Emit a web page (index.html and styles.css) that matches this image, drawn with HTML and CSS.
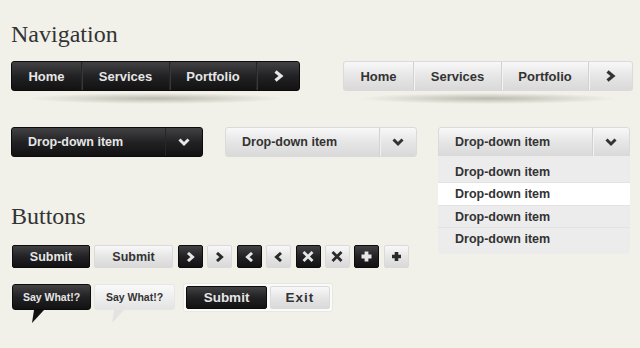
FILE: index.html
```html
<!DOCTYPE html>
<html lang="en">
<head>
	<meta charset="UTF-8">
	<title>UI Kit</title>
	<link rel="stylesheet" href="styles.css">
</head>
<body>
	<main class="page">
		<h1 class="title">Navigation</h1>

		<div class="nav-row">
			<div class="nav-wrap">
				<nav class="nav dark">
					<a class="nav-item home">Home</a>
					<a class="nav-item services">Services</a>
					<a class="nav-item portfolio">Portfolio</a>
					<a class="nav-item more">
						<svg width="11" height="12" viewBox="0 0 11 12"><path d="M2.5 1.5 L8 6 L2.5 10.5" fill="none" stroke="currentColor" stroke-width="3.2"/></svg>
					</a>
				</nav>
				<div class="nav-shadow"></div>
			</div>
			<div class="nav-wrap">
				<nav class="nav light">
					<a class="nav-item home">Home</a>
					<a class="nav-item services">Services</a>
					<a class="nav-item portfolio">Portfolio</a>
					<a class="nav-item more">
						<svg width="11" height="12" viewBox="0 0 11 12"><path d="M2.5 1.5 L8 6 L2.5 10.5" fill="none" stroke="currentColor" stroke-width="3.2"/></svg>
					</a>
				</nav>
				<div class="nav-shadow"></div>
			</div>
		</div>

		<div class="dropdown-row">
			<div class="dropdown dark">
				<span class="dropdown-label">Drop-down item</span>
				<span class="caret">
					<svg width="12" height="9" viewBox="0 0 12 9"><path d="M1.5 1.5 L6 6 L10.5 1.5" fill="none" stroke="currentColor" stroke-width="3"/></svg>
				</span>
			</div>
			<div class="dropdown light">
				<span class="dropdown-label">Drop-down item</span>
				<span class="caret">
					<svg width="12" height="9" viewBox="0 0 12 9"><path d="M1.5 1.5 L6 6 L10.5 1.5" fill="none" stroke="currentColor" stroke-width="3"/></svg>
				</span>
			</div>
			<div class="dropdown light open">
				<span class="dropdown-label">Drop-down item</span>
				<span class="caret">
					<svg width="12" height="9" viewBox="0 0 12 9"><path d="M1.5 1.5 L6 6 L10.5 1.5" fill="none" stroke="currentColor" stroke-width="3"/></svg>
				</span>
				<ul class="dropdown-menu">
					<li>Drop-down item</li>
					<li class="active">Drop-down item</li>
					<li>Drop-down item</li>
					<li>Drop-down item</li>
				</ul>
			</div>
		</div>

		<h1 class="title buttons-title">Buttons</h1>

		<div class="btn-row">
			<button class="btn dark submit">Submit</button>
			<button class="btn light submit">Submit</button>
			<div class="icon-group">
				<button class="btn dark icon"><svg width="9" height="10" viewBox="0 0 9 10"><path d="M2 1 L6.5 5 L2 9" fill="none" stroke="currentColor" stroke-width="3"/></svg></button>
				<button class="btn light icon"><svg width="9" height="10" viewBox="0 0 9 10"><path d="M2 1 L6.5 5 L2 9" fill="none" stroke="currentColor" stroke-width="3"/></svg></button>
				<button class="btn dark icon"><svg width="9" height="10" viewBox="0 0 9 10"><path d="M7 1 L2.5 5 L7 9" fill="none" stroke="currentColor" stroke-width="3"/></svg></button>
				<button class="btn light icon"><svg width="9" height="10" viewBox="0 0 9 10"><path d="M7 1 L2.5 5 L7 9" fill="none" stroke="currentColor" stroke-width="3"/></svg></button>
				<button class="btn dark icon"><svg width="12" height="11" viewBox="0 0 12 11"><path d="M1.5 1 L10.5 10 M10.5 1 L1.5 10" fill="none" stroke="currentColor" stroke-width="2.8"/></svg></button>
				<button class="btn light icon"><svg width="12" height="11" viewBox="0 0 12 11"><path d="M1.5 1 L10.5 10 M10.5 1 L1.5 10" fill="none" stroke="currentColor" stroke-width="2.8"/></svg></button>
				<button class="btn dark icon"><svg width="11" height="11" viewBox="0 0 11 11"><path d="M5.5 0.5 V10.5 M0.5 5.5 H10.5" fill="none" stroke="currentColor" stroke-width="3.8"/></svg></button>
				<button class="btn light icon"><svg width="11" height="11" viewBox="0 0 11 11"><path d="M5.5 1 V10 M1 5.5 H10" fill="none" stroke="currentColor" stroke-width="3.6"/></svg></button>
			</div>
		</div>

		<div class="btn-row bottom-row">
			<span class="bubble dark">Say What!?</span>
			<span class="bubble light">Say What!?</span>
			<div class="btn-group">
				<button class="btn dark group-submit">Submit</button>
				<button class="btn light group-exit">Exit</button>
			</div>
		</div>
	</main>
</body>
</html>
```

FILE: styles.css
```css
html {
	box-sizing: border-box;
}

*, *:before, *:after {
	box-sizing: inherit;
}

body {
	margin: 0;
	background: #f1f1ea;
	font-family: "Liberation Sans", Arial, sans-serif;
	font-weight: bold;
	font-size: 12.5px;
}

.page {
	padding: 0 10px 0 11px;
	width: 640px;
	height: 348px;
	overflow: hidden;
}

.title {
	font-family: "Liberation Serif", Georgia, serif;
	font-weight: normal;
	font-size: 24px;
	line-height: 28px;
	color: #333;
	margin: 20px 0 0;
}

.dark {
	background: linear-gradient(#424245, #222224 50%, #121213);
	color: #e6e6e6;
	border: 1px solid #0c0c0c;
}

.light {
	background: linear-gradient(#f8f8f8, #e6e6e6 50%, #d9d9d9);
	color: #333;
	border: 1px solid #dadada;
}

/* navigation */

.nav-row {
	display: flex;
	gap: 43px;
	margin-top: 13px;
}

.nav {
	display: flex;
	height: 30px;
	border-radius: 3px;
	font-size: 13px;
}

.nav-item {
	display: flex;
	align-items: center;
	justify-content: center;
}

.nav-item + .nav-item {
	border-left: 1px solid #262628;
	box-shadow: inset 1px 0 #38383b;
}

.nav.light .nav-item + .nav-item {
	border-left: 1px solid #d2d2d2;
	box-shadow: inset 1px 0 #f4f4f4;
}

.home { width: 69px; }
.services { width: 88px; }
.portfolio { width: 87px; }
.more { width: 43px; }

.nav.light .more { width: 44px; }

.nav-shadow {
	height: 11px;
	margin: 2px 16px 0;
	background: radial-gradient(ellipse closest-side, rgba(60, 60, 40, .3), rgba(60, 60, 40, 0));
}

/* dropdowns */

.dropdown-row {
	display: flex;
	gap: 22px;
	margin-top: 23px;
}

.dropdown {
	display: flex;
	width: 192px;
	height: 30px;
	border-radius: 3px;
}

.dropdown-label {
	flex: 1;
	display: flex;
	align-items: center;
	padding-left: 16px;
}

.caret {
	width: 37px;
	display: flex;
	align-items: center;
	justify-content: center;
	border-left: 1px solid #262628;
}

.dropdown.light .caret {
	border-left: 1px solid #d2d2d2;
	box-shadow: inset 1px 0 #f2f2f2;
}

.dropdown.open {
	position: relative;
	border-radius: 3px 3px 0 0;
	margin-left: -1px;
}

.dropdown-menu {
	position: absolute;
	top: 100%;
	left: -1px;
	right: -1px;
	margin: 0;
	padding: 5px 0 3px;
	list-style: none;
	background: #ececec;
	border-radius: 0 0 3px 3px;
	color: #333;
}

.dropdown-menu li {
	height: 22.4px;
	line-height: 22px;
	padding-left: 17px;
	border-bottom: 1px solid #e2e2e2;
}

.dropdown-menu li:last-child {
	border-bottom: 0;
}

.dropdown-menu li.active {
	background: #fff;
}

/* buttons */

.buttons-title {
	margin-top: 45px;
}

.btn-row {
	display: flex;
	align-items: flex-start;
	gap: 4px;
	margin-top: 15px;
	padding-left: 1px;
}

.btn {
	font: inherit;
	height: 23px;
	padding: 0;
	border-radius: 2px;
	display: flex;
	align-items: center;
	justify-content: center;
}

.submit {
	width: 78px;
}

.btn.light.submit {
	width: 79px;
}

.icon-group {
	display: flex;
	gap: 4.4px;
	margin-left: 1px;
}

.icon {
	width: 25px;
}

.icon.light {
	color: #2a2a2a;
}

.bottom-row {
	gap: 3px;
}

.bubble {
	position: relative;
	display: flex;
	align-items: center;
	justify-content: center;
	height: 26px;
	margin-top: 1px;
	width: 79px;
	border-radius: 3px;
	font-size: 10.5px;
}

.bubble.light {
	width: 81px;
	border-color: #e6e6e6;
	background: linear-gradient(#f9f9f9, #e4e4e4);
}

/* speech bubble tail */
.bubble:after {
	content: "";
	position: absolute;
	top: 25px;
	left: 19px;
	width: 12px;
	height: 13px;
	background: #111;
	clip-path: polygon(2px 0, 12px 0, 0 100%);
}

.bubble.light:after {
	left: 17px;
	background: #e3e3e3;
}

.btn-group {
	display: flex;
	gap: 3px;
	margin-left: 5px;
	padding: 2px;
	background: #fafaf8;
	border: 1px solid #e8e8e2;
	border-radius: 3px;
}

.group-submit {
	width: 81px;
	font-size: 13.5px;
}

.group-exit {
	width: 60px;
	font-size: 13.5px;
	letter-spacing: 1px;
}
```
